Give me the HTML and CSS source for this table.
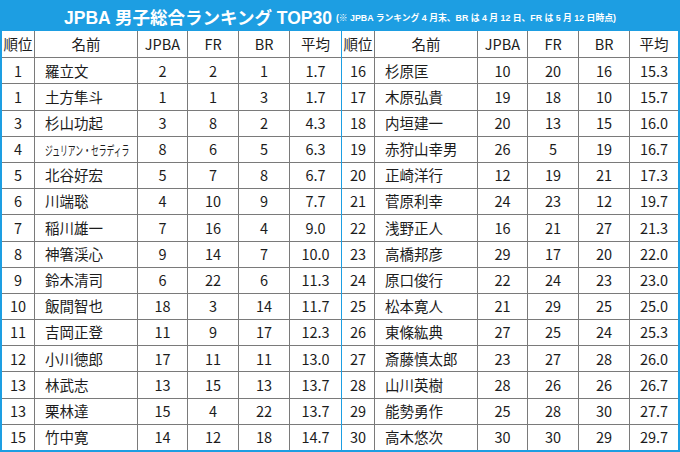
FILE: index.html
```html
<!DOCTYPE html>
<html lang="ja">
<head>
<meta charset="utf-8">
<link rel="stylesheet" href="styles.css">
</head>
<body>
<div class="frame">
  <div class="title"><span class="main">JPBA 男子総合ランキング TOP30</span><span class="note">(※ JPBA ランキング 4 月末、BR は 4 月 12 日、FR は 5 月 12 日時点)</span></div>
  <div class="tables">
    <div class="grid left">
      <div class="c h">順位</div><div class="c h">名前</div><div class="c h">JPBA</div><div class="c h">FR</div><div class="c h">BR</div><div class="c h">平均</div>
      <div class="c">1</div><div class="c n">羅立文</div><div class="c">2</div><div class="c">2</div><div class="c">1</div><div class="c">1.7</div>
      <div class="c">1</div><div class="c n">土方隼斗</div><div class="c">1</div><div class="c">1</div><div class="c">3</div><div class="c">1.7</div>
      <div class="c">3</div><div class="c n">杉山功起</div><div class="c">3</div><div class="c">8</div><div class="c">2</div><div class="c">4.3</div>
      <div class="c">4</div><div class="c n"><span class="cond">ジュリアン・セラディラ</span></div><div class="c">8</div><div class="c">6</div><div class="c">5</div><div class="c">6.3</div>
      <div class="c">5</div><div class="c n">北谷好宏</div><div class="c">5</div><div class="c">7</div><div class="c">8</div><div class="c">6.7</div>
      <div class="c">6</div><div class="c n">川端聡</div><div class="c">4</div><div class="c">10</div><div class="c">9</div><div class="c">7.7</div>
      <div class="c">7</div><div class="c n">稲川雄一</div><div class="c">7</div><div class="c">16</div><div class="c">4</div><div class="c">9.0</div>
      <div class="c">8</div><div class="c n">神箸渓心</div><div class="c">9</div><div class="c">14</div><div class="c">7</div><div class="c">10.0</div>
      <div class="c">9</div><div class="c n">鈴木清司</div><div class="c">6</div><div class="c">22</div><div class="c">6</div><div class="c">11.3</div>
      <div class="c">10</div><div class="c n">飯間智也</div><div class="c">18</div><div class="c">3</div><div class="c">14</div><div class="c">11.7</div>
      <div class="c">11</div><div class="c n">吉岡正登</div><div class="c">11</div><div class="c">9</div><div class="c">17</div><div class="c">12.3</div>
      <div class="c">12</div><div class="c n">小川徳郎</div><div class="c">17</div><div class="c">11</div><div class="c">11</div><div class="c">13.0</div>
      <div class="c">13</div><div class="c n">林武志</div><div class="c">13</div><div class="c">15</div><div class="c">13</div><div class="c">13.7</div>
      <div class="c">13</div><div class="c n">栗林達</div><div class="c">15</div><div class="c">4</div><div class="c">22</div><div class="c">13.7</div>
      <div class="c">15</div><div class="c n">竹中寛</div><div class="c">14</div><div class="c">12</div><div class="c">18</div><div class="c">14.7</div>
    </div>
    <div class="grid right">
      <div class="c h">順位</div><div class="c h">名前</div><div class="c h">JPBA</div><div class="c h">FR</div><div class="c h">BR</div><div class="c h">平均</div>
      <div class="c">16</div><div class="c n">杉原匡</div><div class="c">10</div><div class="c">20</div><div class="c">16</div><div class="c">15.3</div>
      <div class="c">17</div><div class="c n">木原弘貴</div><div class="c">19</div><div class="c">18</div><div class="c">10</div><div class="c">15.7</div>
      <div class="c">18</div><div class="c n">内垣建一</div><div class="c">20</div><div class="c">13</div><div class="c">15</div><div class="c">16.0</div>
      <div class="c">19</div><div class="c n">赤狩山幸男</div><div class="c">26</div><div class="c">5</div><div class="c">19</div><div class="c">16.7</div>
      <div class="c">20</div><div class="c n">正崎洋行</div><div class="c">12</div><div class="c">19</div><div class="c">21</div><div class="c">17.3</div>
      <div class="c">21</div><div class="c n">菅原利幸</div><div class="c">24</div><div class="c">23</div><div class="c">12</div><div class="c">19.7</div>
      <div class="c">22</div><div class="c n">浅野正人</div><div class="c">16</div><div class="c">21</div><div class="c">27</div><div class="c">21.3</div>
      <div class="c">23</div><div class="c n">高橋邦彦</div><div class="c">29</div><div class="c">17</div><div class="c">20</div><div class="c">22.0</div>
      <div class="c">24</div><div class="c n">原口俊行</div><div class="c">22</div><div class="c">24</div><div class="c">23</div><div class="c">23.0</div>
      <div class="c">25</div><div class="c n">松本寛人</div><div class="c">21</div><div class="c">29</div><div class="c">25</div><div class="c">25.0</div>
      <div class="c">26</div><div class="c n">東條紘典</div><div class="c">27</div><div class="c">25</div><div class="c">24</div><div class="c">25.3</div>
      <div class="c">27</div><div class="c n">斎藤慎太郎</div><div class="c">23</div><div class="c">27</div><div class="c">28</div><div class="c">26.0</div>
      <div class="c">28</div><div class="c n">山川英樹</div><div class="c">28</div><div class="c">26</div><div class="c">26</div><div class="c">26.7</div>
      <div class="c">29</div><div class="c n">能勢勇作</div><div class="c">25</div><div class="c">28</div><div class="c">30</div><div class="c">27.7</div>
      <div class="c">30</div><div class="c n">高木悠次</div><div class="c">30</div><div class="c">30</div><div class="c">29</div><div class="c">29.7</div>
    </div>
  </div>
</div>
</body>
</html>
```
FILE: styles.css
```css
* { box-sizing: border-box; }
html, body { margin: 0; padding: 0; }
body {
  width: 680px;
  height: 452px;
  background: #1d9ee2;
  overflow: hidden;
}
.frame {
  display: flex;
  flex-direction: column;
  width: 680px;
  height: 452px;
}
.title {
  height: 31px;
  display: flex;
  align-items: center;
  justify-content: center;
  gap: 4px;
  color: #ffffff;
  font-family: "Liberation Sans", "Noto Sans CJK JP", sans-serif;
  font-weight: bold;
  padding-top: 1px;
}
.title .main {
  font-size: 17.5px;
}
.title .note {
  font-size: 8.8px;
  padding-top: 3px;
}
.tables {
  display: flex;
  gap: 1px;
  padding: 0 2px 2px 2px;
  height: 421px;
}
.grid {
  display: grid;
  grid-template-rows: repeat(16, 1fr);
  background: #ffffff;
  height: 100%;
  font-family: "Noto Sans CJK JP", sans-serif;
  font-size: 14.5px;
  color: #1c1c1c;
}
.left { grid-template-columns: 32px 103px 50px 51px 51px 52px; width: 339px; }
.right { grid-template-columns: 32px 103px 50px 51px 51px 49px; width: 336px; }
.c {
  display: flex;
  align-items: center;
  justify-content: center;
  border-left: 1px solid #7a7a7a;
  border-top: 1px solid #7a7a7a;
  line-height: 1;
  white-space: nowrap;
  overflow: hidden;
}
.c:nth-child(6n+1) { border-left: none; }
.c.h { border-top: none; }
.c.n { justify-content: flex-start; padding-left: 10px; }
.cond {
  display: inline-block;
  font-size: 13px;
  transform: scaleX(0.6);
  transform-origin: left center;
}
```
